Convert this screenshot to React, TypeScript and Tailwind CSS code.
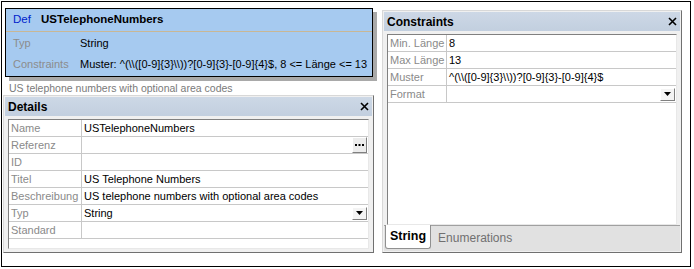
const font = { fontFamily: '"Liberation Sans", Arial, sans-serif' };

type Row = { label: string; value?: string; kind?: "dots" | "combo" };

const details: Row[] = [
  { label: "Name", value: "USTelephoneNumbers" },
  { label: "Referenz", kind: "dots" },
  { label: "ID" },
  { label: "Titel", value: "US Telephone Numbers" },
  { label: "Beschreibung", value: "US telephone numbers with optional area codes" },
  { label: "Typ", value: "String", kind: "combo" },
  { label: "Standard" },
];

const constraints: Row[] = [
  { label: "Min. Länge", value: "8" },
  { label: "Max Länge", value: "13" },
  { label: "Muster", value: "^(\\\\([0-9]{3}\\\\))?[0-9]{3}-[0-9]{4}$" },
  { label: "Format", kind: "combo" },
];

function CloseX() {
  return (
    <svg width="9" height="9" viewBox="0 0 9 9" className="mr-[3px]">
      <path d="M1 1 L8 8 M8 1 L1 8" stroke="#000" strokeWidth="1.6" />
    </svg>
  );
}

function Combo() {
  return (
    <div className="w-[15px] h-[13px] bg-[#f4f4f4] border border-t-white border-l-white border-r-[#808080] border-b-[#808080] flex items-center justify-center">
      <svg width="7" height="4" viewBox="0 0 7 4">
        <path d="M0 0 H7 L3.5 4 Z" fill="#000" />
      </svg>
    </div>
  );
}

function Dots() {
  return (
    <div className="w-[15px] h-[16px] bg-[#ececec] border border-t-white border-l-white border-r-[#808080] border-b-[#808080] flex items-center justify-center">
      <svg width="9" height="2" viewBox="0 0 9 2">
        <rect x="0" y="0" width="2" height="2" fill="#000" />
        <rect x="3.5" y="0" width="2" height="2" fill="#000" />
        <rect x="7" y="0" width="2" height="2" fill="#000" />
      </svg>
    </div>
  );
}

function Grid({ rows, labelW }: { rows: Row[]; labelW: string }) {
  return (
    <div>
      {rows.map((r) => (
        <div key={r.label} className="flex h-[17px] border-b border-[#c8c8c8]">
          <div className={`${labelW} shrink-0 border-r border-[#c8c8c8] pl-[2px] text-[#8a8a8a] leading-[16px] whitespace-nowrap`}>
            {r.label}
          </div>
          <div className="flex-1 flex items-center justify-between pl-[2px] pr-[1px] text-black whitespace-nowrap">
            <span className="leading-[16px]">{r.value ?? ""}</span>
            {r.kind === "combo" && <Combo />}
            {r.kind === "dots" && <Dots />}
          </div>
        </div>
      ))}
    </div>
  );
}

function Panel({ title, className, children }: { title: string; className: string; children: React.ReactNode }) {
  return (
    <div className={`flex flex-col bg-[#f0f0f0] border border-t-[#d8d8d8] border-l-[#d8d8d8] border-r-[#707070] border-b-[#707070] p-[1px] ${className}`}>
      <div className="h-[19px] shrink-0 bg-gradient-to-b from-[#cdd8e6] to-[#c2cfdf] flex items-center justify-between pl-[3px]">
        <span className="font-bold text-[12px] text-black">{title}</span>
        <CloseX />
      </div>
      {children}
    </div>
  );
}

export default function App() {
  return (
    <div className="w-[694px] h-[269px] bg-white text-[11px]" style={font}>
      <div className="ml-[1px] mt-[1px] w-[690px] h-[266px] border border-black flex">
        {/* left column */}
        <div className="w-[372px] pl-[1px] pt-[6px] flex flex-col">
          <div className="ml-[2px] w-[368px] h-[69px] bg-[#a6caf0] border border-black shadow-[4px_4px_0_#a9a9a9] flex flex-col">
            <div className="h-[23px] border-b border-[#c9b795] flex items-center pl-[7px]">
              <span className="text-[#0022cc] w-[28px] text-[11.5px]">Def</span>
              <span className="font-bold text-black text-[11.5px]">USTelephoneNumbers</span>
            </div>
            <div className="h-[22px] flex items-center pl-[7px]">
              <span className="text-[#8c8c8c] w-[67px]">Typ</span>
              <span>String</span>
            </div>
            <div className="h-[21px] flex items-center pl-[7px]">
              <span className="text-[#8c8c8c] w-[67px]">Constraints</span>
              <span className="whitespace-nowrap">Muster: ^(\\([0-9]{"{3}"}\\))?[0-9]{"{3}"}-[0-9]{"{4}"}$, 8 &lt;= Länge &lt;= 13</span>
            </div>
          </div>
          <div className="mt-[5px] pl-[6px] text-[10.5px] leading-[13px] text-[#7a7a7a]">
            US telephone numbers with optional area codes
          </div>
          <Panel title="Details" className="mt-0 w-[371px] h-[158px]">
            <div className="mt-[3px] mx-[3px] flex-1 mb-[2px] bg-white border border-t-[#808080] border-l-[#808080] border-r-[#e8e8e8] border-b-[#e8e8e8]">
              <Grid rows={details} labelW="w-[73px]" />
            </div>
          </Panel>
        </div>
        {/* right column */}
        <div className="pl-[8px] pt-[8px]">
          <Panel title="Constraints" className="w-[300px] h-[243px]">
            <div className="mt-[3px] mx-[3px] flex-1 bg-white border border-t-[#808080] border-l-[#808080] border-r-[#e8e8e8] border-b-[#e8e8e8]">
              <Grid rows={constraints} labelW="w-[59px]" />
            </div>
            <div className="h-[26px] bg-[#e1e1e1] border-t border-[#a0a0a0] flex items-start pl-[1px]">
              <div className="-mt-px h-[24px] px-[4px] bg-white border border-t-0 border-[#909090] rounded-b-[3px] flex items-center font-bold text-[12.5px] text-black">
                String
              </div>
              <div className="h-[23px] px-[7px] flex items-center text-[12px] text-[#707070]">Enumerations</div>
            </div>
          </Panel>
        </div>
      </div>
    </div>
  );
}
